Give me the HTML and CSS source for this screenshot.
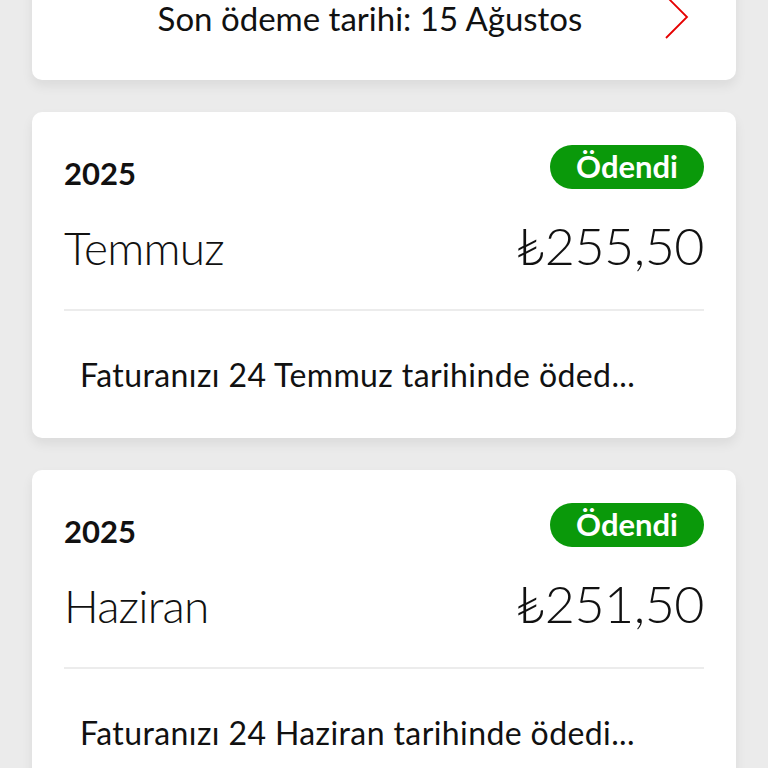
FILE: index.html
```html
<!DOCTYPE html>
<html lang="tr">
<head>
    <meta charset="UTF-8">
    <meta name="viewport" content="width=device-width, initial-scale=1.0">
    <title>Faturalarım</title>
    <link rel="stylesheet" href="styles.css">
</head>
<body>
    <div id="bill-list">
        <div class="card current-bill">
            <div class="due-row">
                <span class="due-text">Son ödeme tarihi: 15 Ağustos</span>
                <svg class="chevron" width="26" height="44" viewBox="0 0 26 44">
                    <path d="M2 0 L23 21 L2 42" fill="none" stroke="#e60000" stroke-width="1.8"/>
                </svg>
            </div>
        </div>

        <div class="card bill">
            <div class="bill-head">
                <span class="bill-year">2025</span>
                <span class="badge paid">Ödendi</span>
            </div>
            <div class="bill-main">
                <span class="bill-month">Temmuz</span>
                <span class="bill-amount">₺255,50</span>
            </div>
            <div class="bill-note">Faturanızı 24 Temmuz tarihinde öded...</div>
        </div>

        <div class="card bill">
            <div class="bill-head">
                <span class="bill-year">2025</span>
                <span class="badge paid">Ödendi</span>
            </div>
            <div class="bill-main">
                <span class="bill-month">Haziran</span>
                <span class="bill-amount">₺251,50</span>
            </div>
            <div class="bill-note">Faturanızı 24 Haziran tarihinde ödedi...</div>
        </div>
    </div>
</body>
</html>
```

FILE: styles.css
```css
body {
    margin: 0;
    background-color: #ebebeb;
    color: #111;
    font-family: Lato, "Open Sans", "DejaVu Sans", sans-serif;
    overflow: hidden;
}
#bill-list {
    display: flex;
    flex-direction: column;
    gap: 32px;
    padding: 0 32px;
}
.card {
    background-color: #ffffff;
    border-radius: 10px;
    box-shadow: 0 6px 12px rgba(0, 0, 0, 0.07);
    padding: 0 32px;
}
.current-bill {
    margin-top: -60px;
    height: 140px;
    box-sizing: border-box;
    padding-top: 56px;
}
.due-row {
    display: flex;
    align-items: center;
    height: 44px;
}
.due-text {
    flex: 1;
    text-align: center;
    padding-left: 12px;
    font-size: 33px;
    font-weight: 400;
}
.chevron {
    margin-right: 14px;
}
.bill-head {
    display: flex;
    justify-content: space-between;
    align-items: center;
    padding-top: 30px;
}
.bill-year {
    font-size: 31px;
    font-weight: 700;
    padding-top: 12px;
}
.badge {
    height: 44px;
    line-height: 42px;
    padding: 0 26px;
    border-radius: 22px;
    font-size: 31px;
    font-weight: 700;
    color: #fff;
}
.paid {
    background-color: #0a990a;
}
.bill-main {
    display: flex;
    justify-content: space-between;
    align-items: baseline;
    height: 76px;
    padding-top: 22px;
    border-bottom: 2px solid #ececec;
    padding-bottom: 19px;
}
.bill-month {
    font-size: 46px;
    font-weight: 300;
    letter-spacing: -0.8px;
}
.bill-amount {
    font-size: 52px;
    font-weight: 300;
    letter-spacing: -0.5px;
}
.bill-note {
    height: 127px;
    display: flex;
    align-items: center;
    padding-left: 16px;
    font-size: 32px;
    letter-spacing: 0.4px;
}
```
